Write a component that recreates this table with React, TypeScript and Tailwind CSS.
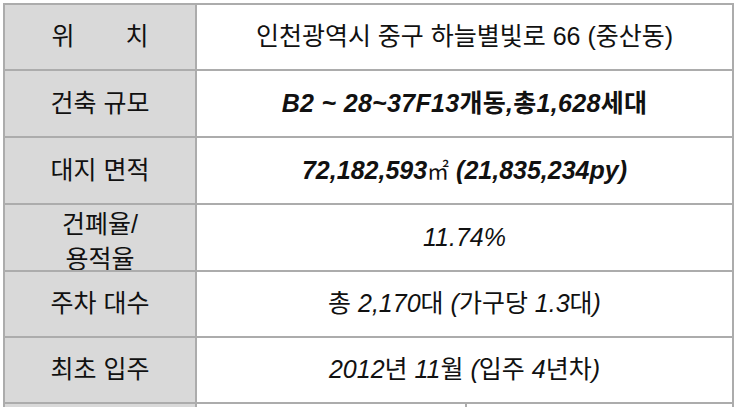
const K = ({ children }: { children: React.ReactNode }) => (
    <span className="not-italic">{children}</span>
);

type Row = { label: React.ReactNode; value: React.ReactNode; h: string };

const rows: Row[] = [
    {
        label: (
            <span className="flex w-[97px] justify-between">
                <span>위</span>
                <span>치</span>
            </span>
        ),
        value: <span>인천광역시 중구 하늘별빛로 66 (중산동)</span>,
        h: 'h-[66px]',
    },
    {
        label: '건축 규모',
        value: (
            <span className="font-bold italic tracking-[0.3px]">
                B2 ~ 28~37F13<K>개동</K>,<K>총</K>1,628<K>세대</K>
            </span>
        ),
        h: 'h-[67px]',
    },
    {
        label: '대지 면적',
        value: (
            <span className="font-bold italic">
                72,182,593
                <span className="text-[22px] font-normal not-italic">㎡</span>{' '}
                (21,835,234py)
            </span>
        ),
        h: 'h-[67px]',
    },
    {
        label: (
            <span className="self-start pt-[2px] text-center leading-[35px]">
                건폐율/
                <br />
                용적율
            </span>
        ),
        value: <span className="italic">11.74%</span>,
        h: 'h-[67px]',
    },
    {
        label: '주차 대수',
        value: (
            <span className="italic">
                <K>총</K> 2,170<K>대</K> (<K>가구당</K> 1.3<K>대</K>)
            </span>
        ),
        h: 'h-[66px]',
    },
    {
        label: '최초 입주',
        value: (
            <span className="italic">
                2012<K>년</K> 11<K>월</K> (<K>입주</K> 4<K>년차</K>)
            </span>
        ),
        h: 'h-[66px]',
    },
];

export default function App() {
    return (
        <div className="h-[407px] w-[740px] overflow-hidden bg-white pt-[3px] pl-[3px] font-['Liberation_Sans','Noto_Sans_CJK_KR',sans-serif] text-[25px] text-[#111]">
            <div className="grid w-[731px] grid-cols-[192px_537px] border-t-2 border-l-2 border-[#acacac]">
                {rows.map((row, i) => (
                    <div key={i} className="contents">
                        <div
                            className={`flex ${row.h} items-center justify-center overflow-hidden border-r-2 border-b-2 border-[#acacac] bg-[#d9d9d9]`}
                        >
                            {row.label}
                        </div>
                        <div
                            className={`flex ${row.h} items-center justify-center border-r-2 border-b-2 border-[#acacac] bg-white`}
                        >
                            {row.value}
                        </div>
                    </div>
                ))}
                <div className="h-[20px] border-r-2 border-[#acacac] bg-[#d9d9d9]" />
                <div className="grid h-[20px] grid-cols-[270px_1fr] border-r-2 border-[#acacac]">
                    <div className="border-r-2 border-[#acacac]" />
                    <div />
                </div>
            </div>
        </div>
    );
}
